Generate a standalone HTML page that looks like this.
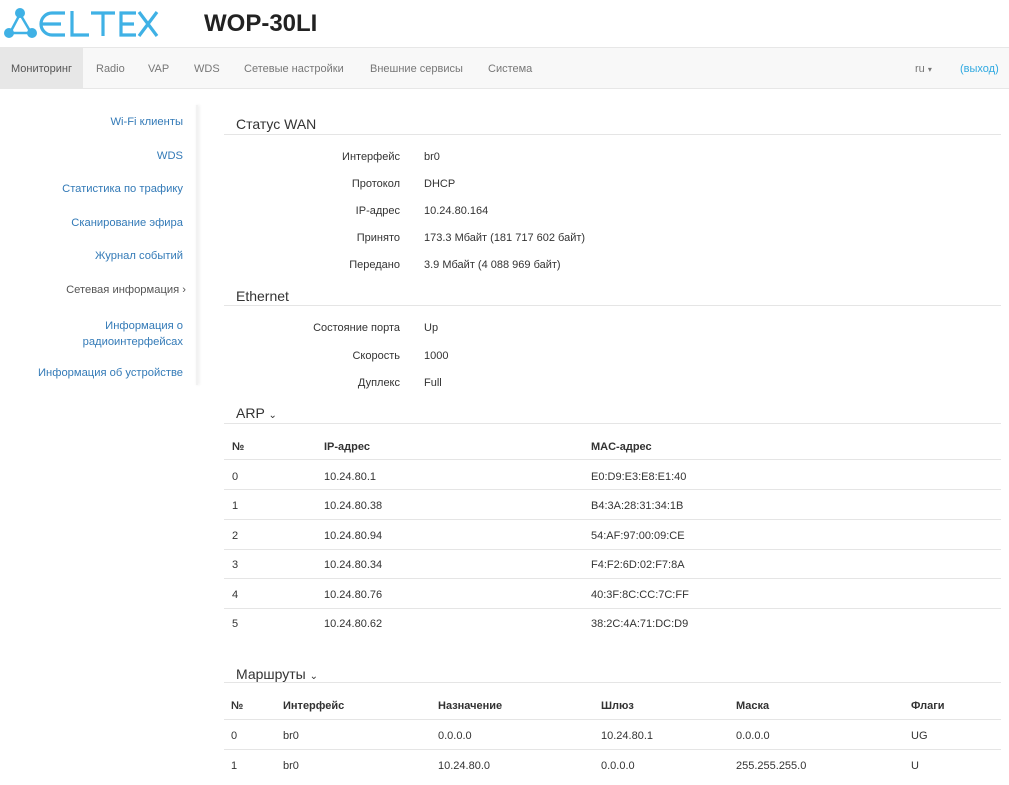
<!DOCTYPE html>
<html><head><meta charset="utf-8"><style>
*{margin:0;padding:0;box-sizing:border-box}
body{width:1009px;height:784px;overflow:hidden;background:#fff;font-family:"Liberation Sans",Arial,sans-serif;font-size:11px;color:#333;position:relative}
.a{position:absolute;white-space:nowrap}
.t{position:absolute;left:0;top:1px;width:1009px;height:784px}
.nav{position:absolute;left:0;top:47px;width:1009px;height:42px;background:#f8f8f8;border-top:1px solid #e7e7e7;border-bottom:1px solid #e7e7e7}
.ni{position:absolute;top:0;height:40px;line-height:42px;color:#777;font-size:11px}
.sb{right:826px;color:#337ab7;text-align:right;font-size:11.2px}
.h{font-size:14px;color:#333}
.ln{position:absolute;left:224px;width:777px;height:1px;background:#e5e5e5}
.lb{right:609px;text-align:right}
.v{left:424px}
.th{font-weight:bold}
</style></head><body>
<svg class="a" style="left:3px;top:6px" width="160" height="34" viewBox="0 0 160 34">
<g fill="#3fb1e5" stroke="#3fb1e5">
<line x1="17" y1="8" x2="8" y2="25" stroke-width="2.5"/><line x1="17" y1="8" x2="27" y2="25" stroke-width="2.5"/><line x1="8" y1="27" x2="27" y2="27" stroke-width="2.5"/>
<circle cx="17" cy="7" r="5" stroke="none"/><circle cx="6" cy="27" r="5" stroke="none"/><circle cx="29" cy="27" r="5" stroke="none"/>
</g>
<g fill="none" stroke="#3fb1e5" stroke-width="3.2">
<path d="M62 7 H49 a11 11 0 0 0 0 22 H62 M39 18 H58"/>
<path d="M69 5 V29 H86"/>
<path d="M88 7 H112 M100 7 V30"/>
<path d="M133 7 H118 V29 H133 M118 18 H131"/>
<path d="M136 6 L154 30 M154 6 L136 30"/>
</g></svg>
<div class="a" style="left:204px;top:10px;font-size:24px;font-weight:bold;color:#222">WOP-30LI</div>
<div class="nav">
<div class="ni" style="left:0;width:83px;background:#e7e7e7;color:#555;text-align:center">Мониторинг</div>
<div class="ni" style="left:96px">Radio</div>
<div class="ni" style="left:148px">VAP</div>
<div class="ni" style="left:194px">WDS</div>
<div class="ni" style="left:244px">Сетевые настройки</div>
<div class="ni" style="left:370px">Внешние сервисы</div>
<div class="ni" style="left:488px">Система</div>
<div class="ni" style="left:915px">ru <span style="font-size:8px">▾</span></div>
<div class="ni" style="left:960px;color:#2fa9e1">(выход)</div>
</div>
<div class="a" style="left:196px;top:105px;width:2px;height:280px;box-shadow:1px 0 3px #e5e5e5;background:#f2f2f2"></div>
<div class="t">
<div class="a sb" style="top:115px">Wi-Fi клиенты</div>
<div class="a sb" style="top:149px">WDS</div>
<div class="a sb" style="top:182px">Статистика по трафику</div>
<div class="a sb" style="top:216px">Сканирование эфира</div>
<div class="a sb" style="top:249px">Журнал событий</div>
<div class="a sb" style="top:283px;color:#555;right:823px">Сетевая информация ›</div>
<div class="a sb" style="top:317px;line-height:16px">Информация о<br>радиоинтерфейсах</div>
<div class="a sb" style="top:366px">Информация об устройстве</div>

<div class="a h" style="left:236px;top:115px">Статус WAN</div>
<div class="a lb" style="top:150px">Интерфейс</div><div class="a v" style="top:150px">br0</div>
<div class="a lb" style="top:177px">Протокол</div><div class="a v" style="top:177px">DHCP</div>
<div class="a lb" style="top:204px">IP-адрес</div><div class="a v" style="top:204px">10.24.80.164</div>
<div class="a lb" style="top:231px">Принято</div><div class="a v" style="top:231px">173.3 Мбайт (181 717 602 байт)</div>
<div class="a lb" style="top:258px">Передано</div><div class="a v" style="top:258px">3.9 Мбайт (4 088 969 байт)</div>
<div class="a h" style="left:236px;top:287px">Ethernet</div>
<div class="a lb" style="top:321px">Состояние порта</div><div class="a v" style="top:321px">Up</div>
<div class="a lb" style="top:349px">Скорость</div><div class="a v" style="top:349px">1000</div>
<div class="a lb" style="top:376px">Дуплекс</div><div class="a v" style="top:376px">Full</div>
<div class="a h" style="left:236px;top:404px">ARP <span style="font-size:10px">⌄</span></div>
<div class="a th" style="left:232px;top:440px">№</div><div class="a th" style="left:324px;top:440px">IP-адрес</div><div class="a th" style="left:591px;top:440px">MAC-адрес</div>
<div class="a" style="left:232px;top:470px">0</div><div class="a" style="left:324px;top:470px">10.24.80.1</div><div class="a" style="left:591px;top:470px">E0:D9:E3:E8:E1:40</div>
<div class="a" style="left:232px;top:499px">1</div><div class="a" style="left:324px;top:499px">10.24.80.38</div><div class="a" style="left:591px;top:499px">B4:3A:28:31:34:1B</div>
<div class="a" style="left:232px;top:529px">2</div><div class="a" style="left:324px;top:529px">10.24.80.94</div><div class="a" style="left:591px;top:529px">54:AF:97:00:09:CE</div>
<div class="a" style="left:232px;top:558px">3</div><div class="a" style="left:324px;top:558px">10.24.80.34</div><div class="a" style="left:591px;top:558px">F4:F2:6D:02:F7:8A</div>
<div class="a" style="left:232px;top:588px">4</div><div class="a" style="left:324px;top:588px">10.24.80.76</div><div class="a" style="left:591px;top:588px">40:3F:8C:CC:7C:FF</div>
<div class="a" style="left:232px;top:617px">5</div><div class="a" style="left:324px;top:617px">10.24.80.62</div><div class="a" style="left:591px;top:617px">38:2C:4A:71:DC:D9</div>
<div class="a h" style="left:236px;top:665px">Маршруты <span style="font-size:10px">⌄</span></div>
<div class="a th" style="left:231px;top:699px">№</div><div class="a th" style="left:283px;top:699px">Интерфейс</div><div class="a th" style="left:438px;top:699px">Назначение</div><div class="a th" style="left:601px;top:699px">Шлюз</div><div class="a th" style="left:736px;top:699px">Маска</div><div class="a th" style="left:911px;top:699px">Флаги</div>
<div class="a" style="left:231px;top:729px">0</div><div class="a" style="left:283px;top:729px">br0</div><div class="a" style="left:438px;top:729px">0.0.0.0</div><div class="a" style="left:601px;top:729px">10.24.80.1</div><div class="a" style="left:736px;top:729px">0.0.0.0</div><div class="a" style="left:911px;top:729px">UG</div>
<div class="a" style="left:231px;top:759px">1</div><div class="a" style="left:283px;top:759px">br0</div><div class="a" style="left:438px;top:759px">10.24.80.0</div><div class="a" style="left:601px;top:759px">0.0.0.0</div><div class="a" style="left:736px;top:759px">255.255.255.0</div><div class="a" style="left:911px;top:759px">U</div>
</div>
<div class="ln" style="top:134px"></div><div class="ln" style="top:305px"></div><div class="ln" style="top:423px"></div>
<div class="ln" style="top:459px"></div><div class="ln" style="top:489px"></div><div class="ln" style="top:519px"></div><div class="ln" style="top:549px"></div><div class="ln" style="top:578px"></div><div class="ln" style="top:608px"></div>
<div class="ln" style="top:682px"></div><div class="ln" style="top:719px"></div><div class="ln" style="top:749px"></div>
</body></html>
